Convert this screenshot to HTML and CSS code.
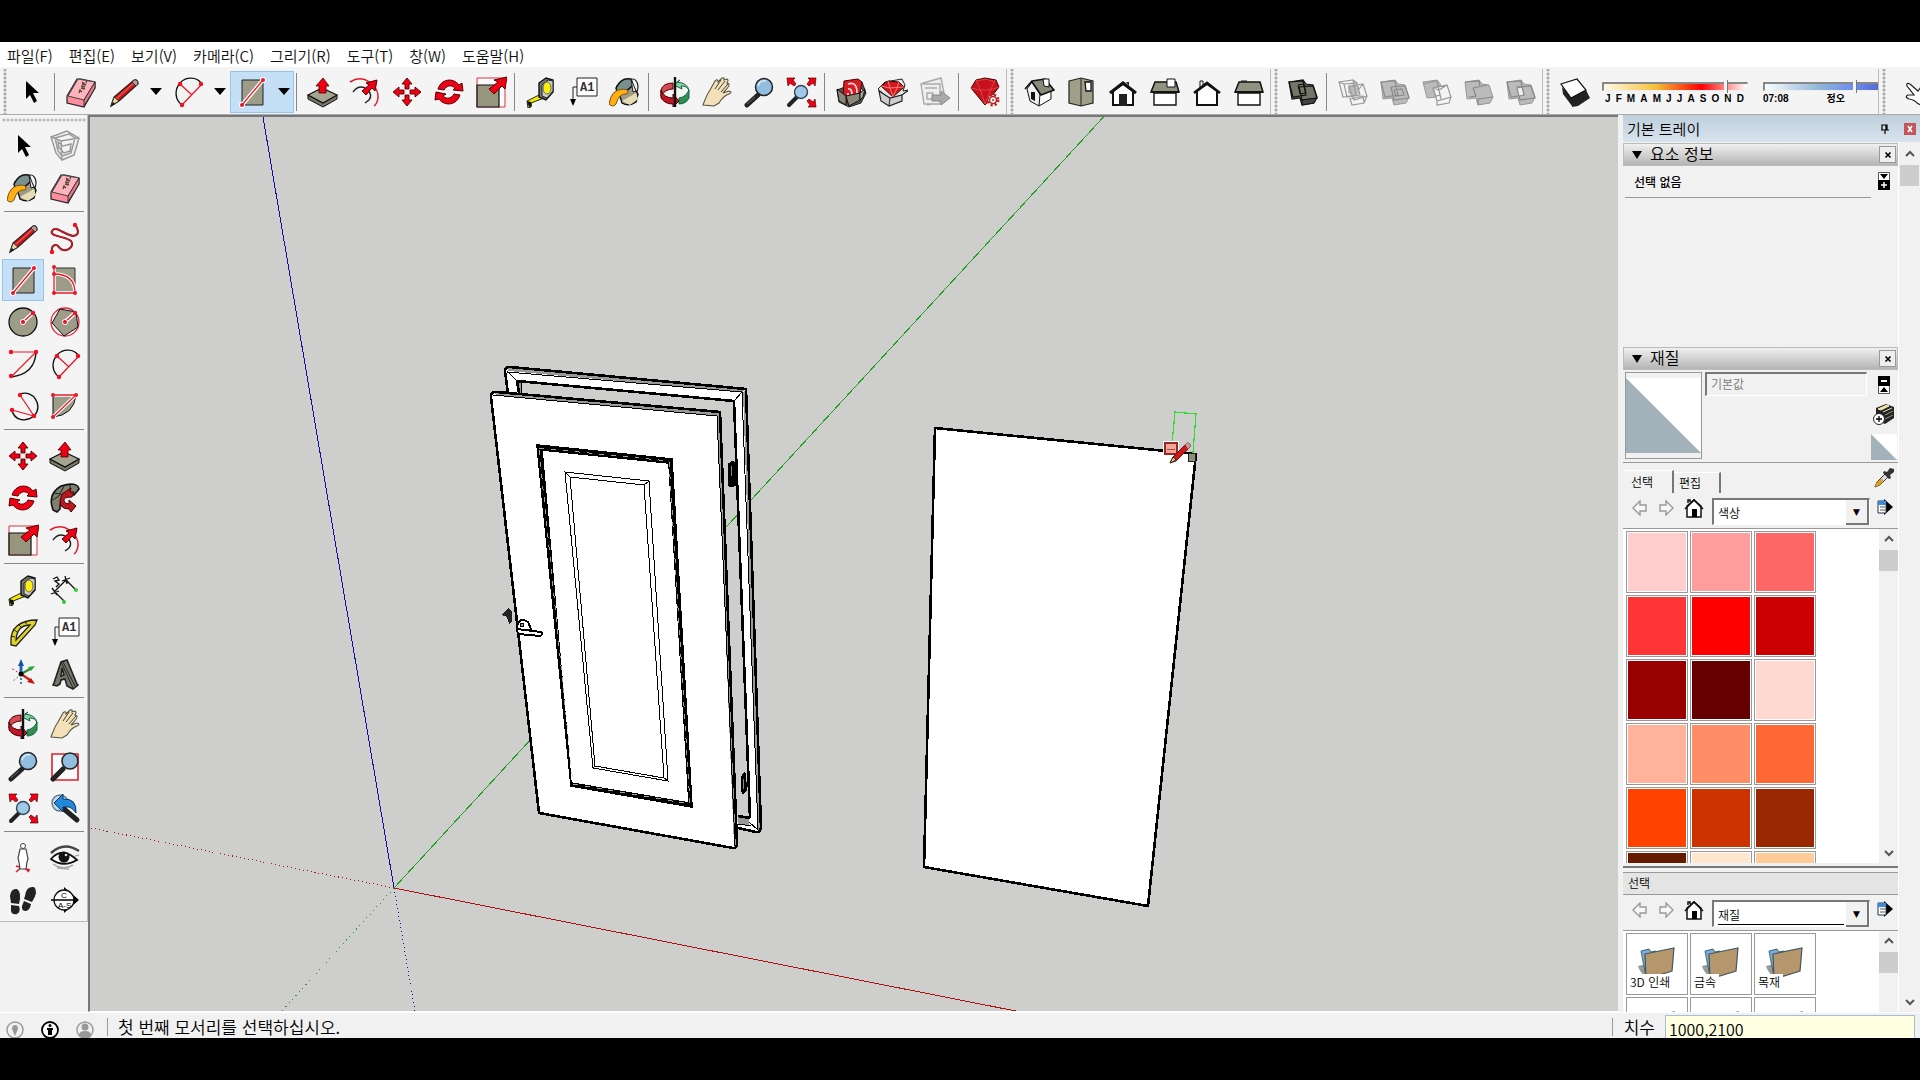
FILE: index.html
```html
<!doctype html>
<html lang="ko">
<head>
  <meta charset="UTF-8">
  <meta name="viewport" content="width=device-width, initial-scale=1">
  <title>SketchUp</title>
  <link rel="stylesheet" href="styles.css">
</head>
<body>

  <!-- icon sheet -->
  <svg class="sheet" aria-hidden="true">
    <symbol id="select" viewBox="0 0 32 32"><path d="M11 5v18l4-4 4 8 3-2-4-8h6z" fill="#000"/></symbol>
    <symbol id="eraser" viewBox="0 0 32 32">
      <path d="M2 20 12 3h4l14 3v6L19 31 2 27z" fill="#ff8c9c" stroke="#222" stroke-width="1.2"/>
      <path d="m3 20 10-17 17 3-11 18z" fill="#ffb3bd" stroke="#444"/>
      <path d="m19 24 11-18v6L19 30z" fill="#e8788c" stroke="#333"/>
      <path d="m14 17 1-3 2 2m-1-4 4 1m-4-3 4 1m-3-3 4 1-4-3m4 1 1-3" fill="none" stroke="#543" stroke-width="1.3"/>
    </symbol>
    <symbol id="pencil" viewBox="0 0 32 32">
      <path d="m3 30 3-9L26 4q4-1 4 4L11 25z" fill="#c81818" stroke="#222" stroke-width="1.2"/>
      <path d="m8 23 18-16" stroke="#f05050" stroke-width="1.5"/>
      <path d="m3 30 3-9 5 4z" fill="#e8d8a0" stroke="#333"/><path d="m3 30 2-4 2 2z" fill="#111"/>
      <path d="m24 6 2-2q4-1 4 4l-2 2z" fill="#b99" stroke="#333"/>
    </symbol>
    <symbol id="arc2" viewBox="0 0 32 32">
      <path d="M10 29C3 24 2 14 8 7s17-6 21 0" fill="none" stroke="#111" stroke-width="1.4"/>
      <path d="m10 29 19-20M8 8l12 11" fill="none" stroke="#f01020" stroke-width="1.2"/>
      <g fill="#f01020"><circle cx="8" cy="8" r="2.2"/><circle cx="29" cy="8" r="2.2"/><circle cx="10" cy="29" r="2.2"/></g>
    </symbol>
    <symbol id="rect" viewBox="0 0 32 32">
      <path d="M6 4h21v25H6z" fill="#9c9c88" stroke="#222"/>
      <path d="M6 29 27 4" stroke="#fff" stroke-width="4"/><circle cx="6" cy="29" r="3" fill="#fff"/><circle cx="27" cy="4" r="3" fill="#fff"/>
      <path d="M6 29 27 4" stroke="#e81828" stroke-width="1.3"/><circle cx="6" cy="29" r="2" fill="#e81828"/><circle cx="27" cy="4" r="2" fill="#e81828"/>
    </symbol>
    <symbol id="pushpull" viewBox="0 0 32 32">
      <path d="M1 19v4l15 8 14-8v-4L16 27z" fill="#77776a" stroke="#111"/>
      <path d="m1 19 14-7 15 7-14 8z" fill="#a5a592" stroke="#111" stroke-width="1.2"/>
      <path d="M12 17V10H9l7-8 6 8h-3v7z" fill="#f00014" stroke="#400" stroke-width=".8"/>
    </symbol>
    <symbol id="offset" viewBox="0 0 32 32">
      <path d="M1 6c14-9 29 4 28 16q-1 6-4 8" fill="none" stroke="#e01828" stroke-width="1.5"/>
      <path d="M4 16q6-8 14-3 6 6 2 11l-4 3" fill="none" stroke="#222" stroke-width="1.4"/>
      <path d="m13 15 7-6-3-2 11-3-2 11-3-3-6 7z" fill="#f00014" stroke="#500"/>
    </symbol>
    <symbol id="move" viewBox="0 0 32 32">
      <g fill="#f00014" stroke="#500" stroke-width=".9"><path d="m16 2 5 6h-3v5h-4V8h-3z"/><path d="m16 30 5-6h-3v-5h-4v5h-3z"/><path d="m2 16 6-5v3h5v4H8v3z"/><path d="m30 16-6-5v3h-5v4h5v3z"/></g>
    </symbol>
    <symbol id="rotate" viewBox="0 0 32 32">
      <path d="M5 13C8 3 20 1 26 9l3-2 1 8-10-1 2-2c-4-4-9-2-11 2z" fill="#f00014" stroke="#500"/>
      <path d="M27 19c-3 10-15 12-21 4l-4 1 1-8 10 2-3 2c4 4 9 2 11-2z" fill="#f00014" stroke="#500"/>
    </symbol>
    <symbol id="scale" viewBox="0 0 32 32">
      <path d="M2 2h28v29H2z" fill="#fff" fill-opacity=".6" stroke="#e03040"/>
      <path d="M2 9h22v22H2z" fill="#96967f" stroke="#111" stroke-width="1.2"/>
      <path d="m14 13 9-7-4-2 13-3-2 12-3-3-8 8z" fill="#f00014" stroke="#500"/>
    </symbol>
    <symbol id="tape" viewBox="0 0 32 32">
      <path d="m2 25 14-7 3 4-13 5v4l-3 1z" fill="#f4e800" stroke="#222"/>
      <path d="m2 25 4 1 1 4-3 1z" fill="#111"/>
      <path d="m14 7 7-5 7 2v12l-7 8-7-3z" fill="#777" stroke="#111" stroke-width="1.4"/>
      <path d="m17 9 6-5 5 1v10l-6 7-5-2z" fill="#ccc" stroke="#222"/><ellipse cx="22" cy="12" rx="4" ry="6" fill="#ffef10" stroke="#665"/>
    </symbol>
    <symbol id="text" viewBox="0 0 32 32">
      <path d="M10 2h20v18H10z" fill="#fff" stroke="#222"/><path d="M10 11H6v14" fill="none" stroke="#222"/>
      <path d="M3 23h6l-3 7z"/><text x="13" y="15" class="glyph">A1</text>
    </symbol>
    <symbol id="paint" viewBox="0 0 32 32">
      <ellipse cx="24" cy="11" rx="5" ry="8" fill="none" stroke="#222" stroke-width="1.2"/>
      <path d="m8 10 12-6 9 14-2 8q-7 5-14 1z" fill="#a09c84" stroke="#111" stroke-width="1.4"/>
      <path d="m13 25 14-8 2 6-8 6z" fill="#e6dcb8"/>
      <path d="M7 12Q12 1 22 3l2 6Q16 18 8 16z" fill="#78908e" stroke="#111" stroke-width="1.5"/>
      <path d="M15 13Q2 13 0 28q4 4 7 0 3-11 11-10 3-4-3-5z" fill="#ffb010" stroke="#775020"/>
      <path d="m22 3 5 12-3 1z" fill="#eee" stroke="#222"/>
    </symbol>
    <symbol id="orbit" viewBox="0 0 32 32">
      <path d="M18 6q11 1 12 9-1-5-8-5l1 3-8-4 6-5z" fill="#8fd0a5" stroke="#164"/>
      <path d="M30 14v8q-3 6-10 6v-6q7-1 10-8z" fill="#2f8e50" stroke="#164"/>
      <path d="M2 14Q4 7 14 7v6Q6 13 2 20z" fill="#d84a54" stroke="#400"/>
      <path d="M2 14v8q4 6 12 6v3l6-6-6-7v4Q5 22 2 14z" fill="#c01428" stroke="#400"/>
      <path d="M16 1v30" stroke="#111" stroke-width="2.4"/>
    </symbol>
    <symbol id="pan" viewBox="0 0 32 32">
      <path d="M2 29q4-11 7-15l5-9q3-3 3 1l4-4q3-1 2 2l3-1q2 1 0 4l2 1q1 2-6 9l6-2q4 1 0 3-6 2-10 9l-5 3z" fill="#f3dfb8" stroke="#554" stroke-width="1.1"/>
      <path d="m14 13 6-9m-3 10 7-9m-4 11 7-8" fill="none" stroke="#443"/>
    </symbol>
    <symbol id="zoom" viewBox="0 0 32 32">
      <path d="m4 29 11-10" stroke="#222" stroke-width="5" stroke-linecap="round"/><path d="m4 28 8-7" stroke="#666"/>
      <circle cx="21" cy="11" r="8.5" fill="#92bde0" stroke="#222" stroke-width="1.5"/><path d="M15 10q2-6 8-5" fill="none" stroke="#d8ecf8" stroke-width="1.5"/>
    </symbol>
    <symbol id="zoomext" viewBox="0 0 32 32">
      <path d="m4 29 8-8" stroke="#222" stroke-width="4" stroke-linecap="round"/><circle cx="16" cy="16" r="6.500" fill="#a0c8e8" stroke="#345" stroke-width="1.4"/>
      <g fill="#f00014" stroke="#500" stroke-width=".7"><path d="M2 2h8L8 4l3 4-2 2-4-3-2 3z"/><path d="M31 2h-8l2 2-3 4 2 2 4-3 2 3z"/><path d="M31 31h-8l2-2-3-4 2-2 4 3 2-3z"/></g>
    </symbol>
    <symbol id="warehouse" viewBox="0 0 32 32">
      <path d="m2 14 8-3 20 6-8-10 5-1 4 11-5 10-12 4-10-5z" fill="#55554a" stroke="#222"/>
      <path d="m9 5 14-2 4 3-3 16-13 5-3-8z" fill="#d61c24" stroke="#500"/><path d="M13 8q9-3 9 9m-9-4q4-1 4 6m-4-2 0 4" fill="none" stroke="#ffd8d8" stroke-width="1.7"/>
      <path d="m2 13 9 7v9l-7-4zM11 20l14-3v7l-11 6z" fill="#8a8978" stroke="#111"/><path d="m25 17 5-4-2 8-3 3z" fill="#aaa995" stroke="#111"/>
    </symbol>
    <symbol id="extware" viewBox="0 0 32 32">
      <path d="m1 13 7-7 17-3 3 6-2 6 5-1-6 5-13 4z" fill="#e8e8e4" stroke="#222"/>
      <path d="m4 10 7-5 11 1 5 5-11 10z" fill="#d41820" stroke="#300"/><path d="m4 10 9 2 14-1M11 5l2 7 3 9 4-9 2-6" fill="none" stroke="#ff7a7a"/>
      <path d="m2 15 11 7 12-3v6l-13 5-8-5z" fill="#ccc" stroke="#222" stroke-width="1.2"/><path d="m13 22-1 8m13-11 6-4" stroke="#222"/>
    </symbol>
    <symbol id="layout" viewBox="0 0 32 32">
      <g fill="#eee" stroke="#aaa" stroke-width="1.4"><path d="m4 7 18-5 4 20-17 7z"/><path d="M2 8h19v20H5z"/><path d="M6 12h12M8 17h6v6H8z"/></g>
      <path d="M13 19h9v-4l9 7-9 7v-4h-9z" fill="#aaa" stroke="#888"/>
    </symbol>
    <symbol id="extmgr" viewBox="0 0 32 32">
      <path d="m2 12 5-8 9-2 11 2 3 7-14 18z" fill="#c5121c" stroke="#400"/><path d="M2 12q14 5 28-1M7 4l4 9 5 15 6-15 4-9M7 5l10-2 9 3" fill="none" stroke="#e84a4a" stroke-width=".8"/>
      <circle cx="24" cy="24" r="5" fill="#f3f3f3" stroke="#c02020" stroke-width="3" stroke-dasharray="2 2"/><circle cx="24" cy="24" r="3.500" fill="#fff" stroke="#c02020" stroke-width="1.6"/><circle cx="24" cy="24" r="1" fill="#c02020"/>
    </symbol>
    <symbol id="iso" viewBox="0 0 32 32">
      <path d="m4 13 5-7 9 14-2 10-9-5z" fill="#eee" stroke="#111"/><path d="m17 18 11-5v10l-12 7z" fill="#fff" stroke="#111"/>
      <path d="m2 13 7-8 13-2 9 11-13 5-9-13" fill="#8a8a78" stroke="#111" stroke-width="1.6"/><path d="M8 16h4v9l-4-2z" fill="#111"/><path d="M20 3h6v8l-5-1z" fill="#fff" stroke="#111"/>
    </symbol>
    <symbol id="top" viewBox="0 0 32 32"><path d="m4 5 12-3 12 3v22l-12 3-12-3z" fill="#a0a08a" stroke="#222" stroke-width="1.2"/><path d="M16 3v27" stroke="#222"/><path d="M20 6h6v9h-5z" fill="#fff" stroke="#111" stroke-width="1.3"/></symbol>
    <symbol id="front" viewBox="0 0 32 32"><path d="M6 15v14h20V15L16 8z" fill="#fff" stroke="#111" stroke-width="2"/><path d="m3 17 13-10 13 10" fill="none" stroke="#111" stroke-width="3"/><path d="M12 18h8v12h-8zM19 6h3v4z" fill="#222"/></symbol>
    <symbol id="right" viewBox="0 0 32 32"><path d="M5 17h22v12H5z" fill="#fff" stroke="#111" stroke-width="1.4"/><path d="m2 16 4-10h21l3 10z" fill="#929280" stroke="#111" stroke-width="1.5"/><path d="M2 16h28" stroke="#111" stroke-width="2"/><path d="M18 3h8v8h-8z" fill="#fff" stroke="#111"/></symbol>
    <symbol id="back" viewBox="0 0 32 32"><path d="M9 12V5h3v5" fill="#fff" stroke="#111"/><path d="M6 15v14h20V15L16 8z" fill="#fff" stroke="#111" stroke-width="2"/><path d="m3 17 13-10 13 10" fill="none" stroke="#111" stroke-width="2.6"/></symbol>
    <symbol id="left" viewBox="0 0 32 32"><path d="M8 6V4h6v2" fill="#888"/><path d="M5 17h22v12H5z" fill="#fff" stroke="#111" stroke-width="1.4"/><path d="m2 16 4-10h21l3 10z" fill="#929280" stroke="#111" stroke-width="1.5"/><path d="M2 16h28" stroke="#111" stroke-width="2"/></symbol>
    <symbol id="solid" viewBox="0 0 32 32">
      <path d="m2 6 14-2 3 4 7 1 4 12-3 6-12 2-2-7-8 1z" fill="#65655a" stroke="#111" stroke-width="1.2"/>
      <path d="m2 6 14-1 3 14-13 2zM12 11l14-1 4 12-15 2z" fill="#757568" stroke="#111" stroke-width="1.2"/><path d="m15 24 15-2-3 5-12 2z" fill="#444" stroke="#111"/><path d="m11 9 6-1 2 9-6 1z" fill="none" stroke="#111"/>
    </symbol>
    <symbol id="solid1" viewBox="0 0 32 32"><path d="m11 9 9-1 2 10-6 2-5-3z" fill="#bbb"/><path d="m2 6 14-2 3 15-13 2zm5 2 13-1 3 12-13 2zm5 3 14-3 4 12-13 4zm1 12 13-3 1 7-12 2zM2 6l5 2m9-4 4 3m6 1-4 5m8 7-3 7" fill="none" stroke="#999" stroke-width="1.2"/></symbol>
    <symbol id="solid2" viewBox="0 0 32 32"><path d="m2 6 14-2 3 4 7 1 4 12-3 6-12 2-2-7-9 1z" fill="#bbb" stroke="#999"/><path d="m2 6 14-1 3 14-13 2zm10 5 14-1 4 12-15 2zm3 3 8-1 2 6-8 1z" fill="none" stroke="#8b8b8b" stroke-width="1.2"/></symbol>
    <symbol id="solid3" viewBox="0 0 32 32"><path d="m2 6 14-2 4 5-8 3 3 9-9 1z" fill="#bbb" stroke="#999"/><path d="m12 12 14-3 4 12-14 4zm4 13v4l12-2 2-6M2 8l14-3 3 14-4 1M12 12l6 2 8-5m-8 5 2 9" fill="none" stroke="#999" stroke-width="1.2"/></symbol>
    <symbol id="solid4" viewBox="0 0 32 32"><path d="m2 6 14-2 3 4 7 1 4 12-3 6-12 2-2-7-9 1z" fill="#bbb" stroke="#999"/><path d="m2 6 14-1 1 6M10 12l3 8-7 1M10 12l14-3m-9 14 15-2m-15 2v6" fill="none" stroke="#888" stroke-width="1.2"/></symbol>
    <symbol id="solid5" viewBox="0 0 32 32"><path d="m2 6 14-2 3 4 7 1 4 12-3 6-12 2-2-7-9 1z" fill="#bbb" stroke="#999"/><path d="m2 6 14-1 3 14-13 2zm10 5 14-1 4 12-15 2z" fill="none" stroke="#888" stroke-width="1.2"/><path d="m12 12 5-1 2 8-5 1z" fill="#eee" stroke="#888"/></symbol>
    <symbol id="shadow" viewBox="0 0 32 32"><path d="m3 11 9 10 1 9-9-12zM12 21l15-7 4 8-12 8-6 1z" fill="#222"/><path d="m2 8 16-5 9 11-15 8z" fill="#fff" stroke="#111" stroke-width="1.2"/></symbol>
    <symbol id="hand" viewBox="0 0 32 32"><path d="M32 6q-5-2-6 5l-3 4-8-7q-4-2-3 2l7 9-6 0q-4 2 1 4 6 1 8 4 5 3 10 3" fill="#fff" stroke="#222" stroke-width="1.2"/></symbol>

    <symbol id="component" viewBox="0 0 32 32"><path d="m2 7 16-6 12 7-5 17-12 5-6-7zM2 7l10 4 18-3M12 11l1 19M6 8l14-4 6 4-4 15-9 3-4-5zM9 12l5 4 8-2-1 7-6 2-5-5z" fill="none" stroke="#999" stroke-width="1.5"/></symbol>
    <symbol id="freehand" viewBox="0 0 32 32"><path id="curve" d="M27 4q5 9-3 10C14 12 6 3 3 9s14 5 19 10c3 4-1 10-8 9-5-1-4-6-8-5q-4 1-3 7" fill="none" stroke="#601018" stroke-width="2"/><path d="M27 4q5 9-3 10C14 12 6 3 3 9s14 5 19 10c3 4-1 10-8 9-5-1-4-6-8-5q-4 1-3 7" fill="none" stroke="#d81c28" stroke-width="1.2"/><circle cx="26" cy="3" r="2.200" fill="#f01020"/><circle cx="3" cy="30" r="2.200" fill="#f01020"/></symbol>
    <symbol id="rotrect" viewBox="0 0 32 32"><path d="M5 4h21v25H5z" fill="#9c9c88" stroke="#333"/><path d="M5 3v26h21c0-14-9-19-21-19" fill="none" stroke="#fff" stroke-width="3.500"/><path d="M5 3v26h21c0-14-9-19-21-19" fill="none" stroke="#e81828" stroke-width="1.3"/><g fill="#e81828"><circle cx="5" cy="3" r="2"/><circle cx="5" cy="10" r="2"/><circle cx="5" cy="29" r="2"/><circle cx="26" cy="29" r="2"/></g></symbol>
    <symbol id="circle" viewBox="0 0 32 32"><circle cx="16" cy="16" r="14" fill="#9c9c88" stroke="#111" stroke-width="1.3"/><path d="m16 16 10-9" stroke="#fff" stroke-width="4"/><path d="m16 16 10-9" stroke="#e81828" stroke-width="1.4"/><circle cx="16" cy="16" r="2.6" fill="#e81828" stroke="#fff"/><circle cx="26" cy="7" r="2.2" fill="#e81828"/></symbol>
    <symbol id="polygon" viewBox="0 0 32 32"><circle cx="16" cy="16" r="14" fill="none" stroke="#e02838" stroke-width="1.3"/><path d="M11 3 27 6l2 15-14 9L3 17z" fill="#9c9c88" stroke="#111"/><path d="m16 16 10-9" stroke="#fff" stroke-width="4"/><path d="m16 16 10-9" stroke="#e81828" stroke-width="1.4"/><circle cx="16" cy="16" r="2.6" fill="#e81828" stroke="#fff"/><circle cx="26" cy="7" r="2.2" fill="#e81828"/></symbol>
    <symbol id="arc1" viewBox="0 0 32 32"><path d="M29 4q-1 22-25 25" fill="none" stroke="#111" stroke-width="1.4"/><path d="M4 4h25L4 29" fill="none" stroke="#e81828" stroke-width="1.2"/><g fill="#f01020"><circle cx="4" cy="4" r="2.2"/><circle cx="29" cy="4" r="2.2"/><circle cx="4" cy="28" r="2.2"/></g></symbol>
    <symbol id="arc3" viewBox="0 0 32 32"><path d="M13 4c13-5 24 12 14 22-9 7-20 4-22-6" fill="none" stroke="#111" stroke-width="1.4"/><path d="m13 5 14 21-22-6" fill="none" stroke="#e81828" stroke-width="1.2"/><g fill="#f01020"><circle cx="13" cy="5" r="2.2"/><circle cx="5" cy="20" r="2.2"/><circle cx="27" cy="26" r="2.2"/></g></symbol>
    <symbol id="pie" viewBox="0 0 32 32"><path d="M4 5h23q-2 20-23 22z" fill="#9c9c88" stroke="#111"/><path d="M4 5h23L4 27" fill="none" stroke="#fff" stroke-width="3.5"/><path d="M4 5h23L4 27" fill="none" stroke="#e81828" stroke-width="1.3"/><g fill="#f01020"><circle cx="4" cy="5" r="2"/><circle cx="27" cy="5" r="2"/><circle cx="4" cy="27" r="2"/></g></symbol>
    <symbol id="follow" viewBox="0 0 32 32"><path d="M4 28Q-2 12 12 4q16-5 18 3l-5 6-5-3q-9 2-9 17l-3 3z" fill="#80806f" stroke="#111" stroke-width="1.6"/><path d="m2 19 8-5 5-10M4 11l8 1m9-9 0 7" fill="none" stroke="#222"/><path d="m13 12 9-6-1 4h4l-2 5q-9 0-8 4 1 3 5 3v-4l7 6-5 6-2-3q-9 0-9-8z" fill="#b9191f" stroke="#400"/></symbol>
    <symbol id="dimension" viewBox="0 0 32 32"><path d="M5 18 17 6m-1-4 2 8m3-6-8 3M3 14l5 7m2-4-8 3m4-2 9 9m2-21 9 9M4 5l4-2 2 3-4 1 4 3-3 3" fill="none" stroke="#111" stroke-width="1.3"/><circle cx="15" cy="28" r="2" fill="#3c3"/><circle cx="27" cy="16" r="2" fill="#3c3"/></symbol>
    <symbol id="protractor" viewBox="0 0 32 32"><path d="M4 26C3 12 13 4 30 4L28 9 9 30 4 29zm5-2L23 9Q10 9 9 24z" fill="#e0d428" stroke="#222" stroke-width="1.3" fill-rule="evenodd"/><path d="m4 20 4 1m-2-8 4 3m1-8 3 3m5-6v3" stroke="#222"/></symbol>
    <symbol id="axes" viewBox="0 0 32 32"><path d="M14 16V7" stroke="#26b" stroke-width="3"/><path d="m14 16 9-5" stroke="#383" stroke-width="2.500"/><path d="m14 16 9 6" stroke="#c22" stroke-width="2.500"/><path d="m14 1 3 7h-6z" fill="#159"/><path d="m28 8-4 5-3-4z" fill="#2a3"/><path d="m28 26-8-2 4-4z" fill="#c11"/><path d="M14 16v12" stroke="#159" stroke-width="1.5" stroke-dasharray="2"/><path d="M14 16 4 10" stroke="#c22" stroke-dasharray="2"/><path d="m14 16-9 8" stroke="#2a3" stroke-dasharray="2"/><circle cx="14" cy="16" r="2.5"/></symbol>
    <symbol id="text3d" viewBox="0 0 32 32"><path d="m5 25 7-21 6-2 10 24 1 1-5 4-6-3-2-7-4 1-1 4-3 2-4-1zM12 18l3-1-2-7z" fill="#77776a" stroke="#222" stroke-width="1.6" fill-rule="evenodd"/><path d="m12 4 12 26M14 4l12 24" stroke="#222"/></symbol>
    <symbol id="zoomwin" viewBox="0 0 32 32"><path d="M3 4h26v26H3z" fill="#fafafa" stroke="#e02030" stroke-width="1.6"/><path d="m4 29 10-10" stroke="#222" stroke-width="5" stroke-linecap="round"/><circle cx="21" cy="11" r="8" fill="#92bde0" stroke="#222" stroke-width="1.5"/></symbol>
    <symbol id="prev" viewBox="0 0 32 32"><circle cx="11" cy="11" r="8" fill="#c2dced" stroke="#678" stroke-width="1.4"/><path d="m15 17 13 11" stroke="#222" stroke-width="5" stroke-linecap="round"/><path d="m5 11 9-9v5q14-1 13 14-5-8-13-6v5z" fill="#2188dc" stroke="#135"/></symbol>
    <symbol id="camera" viewBox="0 0 32 32"><path d="m9 30 7-6 6 6M9 24l14 4" stroke="#e01828" stroke-width="1.5" fill="none"/><circle cx="16" cy="4" r="2.5" fill="#fff" stroke="#444"/><path d="m13 7 6 0 2 10-1 3-1 7h-6l-1-7-1-4z" fill="#fff" stroke="#444" stroke-width="1.2"/></symbol>
    <symbol id="eye" viewBox="0 0 32 32"><path d="M2 11Q15-1 30 9" fill="none" stroke="#444" stroke-width="2.500"/><path d="M2 17q11-13 26 1-14 8-26-1z" fill="#fff" stroke="#111" stroke-width="1.8"/><circle cx="15" cy="15" r="5.500" fill="#111"/><circle cx="17" cy="13" r="1.3" fill="#ddd"/><path d="M4 22q10 7 20 1M8 26l12 1m6-13 4-1" fill="none" stroke="#aaa" stroke-width="1.5"/></symbol>
    <symbol id="walk" viewBox="0 0 32 32"><path d="M3 12q1-8 7-7 5 3 2 15l-8-1zM4 21l8 1q2 6-2 8-5 1-6-3zM18 12q1-10 9-9 5 4-2 15l-8-3zM17 17l7 3q-1 6-5 7-5 0-4-5z" fill="#222"/></symbol>
    <symbol id="section" viewBox="0 0 32 32"><path d="M15 3 30 16 15 29z"/><circle cx="15" cy="16" r="10" fill="#fff" stroke="#111" stroke-width="1.3"/><path d="M2 16h27" stroke="#111" stroke-width="1.6"/><text x="12" y="14" class="tiny">C</text><text x="9" y="24" class="tiny">A-S</text></symbol>

    <symbol id="prevarrow" viewBox="0 0 16 16"><path d="m1 8 7-7v4h6v6H8v4z" fill="#f8f8f8" stroke="#999" stroke-width="1.4"/></symbol>
    <symbol id="nextarrow" viewBox="0 0 16 16"><path d="M15 8 8 1v4H2v6h6v4z" fill="#f8f8f8" stroke="#999" stroke-width="1.4"/></symbol>
    <symbol id="home" viewBox="0 0 20 20"><path d="M3 8v11h14V8l-7-6zM4 5V2h2v2" fill="#fff" stroke="#111" stroke-width="1.5"/><path d="m1 11 9-9 9 9" fill="none" stroke="#111" stroke-width="1.6"/><path d="M8 11h5v8H8z"/></symbol>
    <symbol id="details" viewBox="0 0 18 18"><path d="M8 1v16l9-8z"/><path d="M2 3h8v12H2z" fill="#fff" stroke="#234"/><path d="M2 3h8v4H2z" fill="#3b8ad8"/><path d="M4 9h5m-5 3h5" stroke="#555"/></symbol>
    <symbol id="folder" viewBox="0 0 38 34">
      <path d="m1 20 8-2v13q-6-4-8-11z" fill="#999"/><path d="m4 5 8-2 2 3 5-1v15L9 31z" fill="#79aed6" stroke="#467"/>
      <path d="m8 8 29-6-2 23-26 8z" fill="#b5976b" stroke="#46545c" stroke-width="1.2"/>
    </symbol>
    <symbol id="up" viewBox="0 0 12 12"><path d="m2 8 4-4 4 4" fill="none" stroke="#555" stroke-width="2"/></symbol>
    <symbol id="down" viewBox="0 0 12 12"><path d="m2 4 4 4 4-4" fill="none" stroke="#555" stroke-width="2"/></symbol>
  </svg>

  <div class="app">
    <nav class="menubar">
      <a href="#">파일(F)</a><a href="#">편집(E)</a><a href="#">보기(V)</a><a href="#">카메라(C)</a><a href="#">그리기(R)</a><a href="#">도구(T)</a><a href="#">창(W)</a><a href="#">도움말(H)</a>
    </nav>

    <div class="toolbar">
      <span class="grip first"></span>
      <button class="tool" aria-label="선택"><svg><use href="#select"/></svg></button>
      <span class="sep"></span>
      <button class="tool" aria-label="지우기"><svg><use href="#eraser"/></svg></button>
      <div class="split"><button class="tool" aria-label="선"><svg><use href="#pencil"/></svg></button><button class="drop" aria-label="선 도구"></button></div>
      <div class="split"><button class="tool" aria-label="호"><svg><use href="#arc2"/></svg></button><button class="drop" aria-label="호 도구"></button></div>
      <div class="split active"><button class="tool" aria-label="직사각형"><svg><use href="#rect"/></svg></button><button class="drop" aria-label="도형 도구"></button></div>
      <span class="sep"></span>
      <button class="tool" aria-label="밀기/끌기"><svg><use href="#pushpull"/></svg></button>
      <button class="tool" aria-label="오프셋"><svg><use href="#offset"/></svg></button>
      <button class="tool" aria-label="이동"><svg><use href="#move"/></svg></button>
      <button class="tool" aria-label="회전"><svg><use href="#rotate"/></svg></button>
      <button class="tool" aria-label="배율"><svg><use href="#scale"/></svg></button>
      <span class="sep"></span>
      <button class="tool" aria-label="줄자"><svg><use href="#tape"/></svg></button>
      <button class="tool" aria-label="텍스트"><svg><use href="#text"/></svg></button>
      <button class="tool" aria-label="페인트통"><svg><use href="#paint"/></svg></button>
      <span class="sep"></span>
      <button class="tool" aria-label="궤도"><svg><use href="#orbit"/></svg></button>
      <button class="tool" aria-label="이동 보기"><svg><use href="#pan"/></svg></button>
      <button class="tool" aria-label="확대/축소"><svg><use href="#zoom"/></svg></button>
      <button class="tool" aria-label="범위 확대"><svg><use href="#zoomext"/></svg></button>
      <span class="sep"></span>
      <button class="tool" aria-label="3D Warehouse"><svg><use href="#warehouse"/></svg></button>
      <button class="tool" aria-label="Extension Warehouse"><svg><use href="#extware"/></svg></button>
      <button class="tool" aria-label="LayOut"><svg><use href="#layout"/></svg></button>
      <span class="sep"></span>
      <button class="tool" aria-label="확장 관리자"><svg><use href="#extmgr"/></svg></button>
      <span class="grip"></span>
      <button class="tool" aria-label="등각투상"><svg><use href="#iso"/></svg></button>
      <button class="tool" aria-label="상단"><svg><use href="#top"/></svg></button>
      <button class="tool" aria-label="정면"><svg><use href="#front"/></svg></button>
      <button class="tool" aria-label="오른쪽"><svg><use href="#right"/></svg></button>
      <button class="tool" aria-label="후면"><svg><use href="#back"/></svg></button>
      <button class="tool" aria-label="왼쪽"><svg><use href="#left"/></svg></button>
      <span class="grip"></span>
      <button class="tool" aria-label="외곽 셸"><svg><use href="#solid"/></svg></button>
      <span class="sep"></span>
      <button class="tool" aria-label="교차"><svg><use href="#solid1"/></svg></button>
      <button class="tool" aria-label="결합"><svg><use href="#solid2"/></svg></button>
      <button class="tool" aria-label="빼기"><svg><use href="#solid3"/></svg></button>
      <button class="tool" aria-label="트림"><svg><use href="#solid4"/></svg></button>
      <button class="tool" aria-label="분할"><svg><use href="#solid5"/></svg></button>
      <span class="grip"></span>
      <button class="tool" aria-label="그림자"><svg><use href="#shadow"/></svg></button>
      <div class="slider month">
        <input type="range" min="0" max="100" value="86" aria-label="날짜">
        <div class="ticks"><span>J</span><span>F</span><span>M</span><span>A</span><span>M</span><span>J</span><span>J</span><span>A</span><span>S</span><span>O</span><span>N</span><span>D</span></div>
      </div>
      <div class="slider time">
        <input type="range" min="0" max="100" value="63" aria-label="시간">
        <div class="ticks"><span>07:08</span><span>정오</span></div>
      </div>
      <span class="grip"></span>
      <button class="tool" aria-label="상호 작용"><svg><use href="#hand"/></svg></button>
    </div>

    <main class="work">
      <aside class="palette">
        <span class="handle"></span>
        <button class="tool" aria-label="선택"><svg><use href="#select"/></svg></button>
        <button class="tool" aria-label="구성요소 만들기"><svg><use href="#component"/></svg></button>
        <button class="tool" aria-label="페인트통"><svg><use href="#paint"/></svg></button>
        <button class="tool" aria-label="지우기"><svg><use href="#eraser"/></svg></button>
        <hr>
        <button class="tool" aria-label="선"><svg><use href="#pencil"/></svg></button>
        <button class="tool" aria-label="자유곡선"><svg><use href="#freehand"/></svg></button>
        <button class="tool active" aria-label="직사각형"><svg><use href="#rect"/></svg></button>
        <button class="tool" aria-label="회전된 직사각형"><svg><use href="#rotrect"/></svg></button>
        <button class="tool" aria-label="원"><svg><use href="#circle"/></svg></button>
        <button class="tool" aria-label="다각형"><svg><use href="#polygon"/></svg></button>
        <button class="tool" aria-label="호"><svg><use href="#arc1"/></svg></button>
        <button class="tool" aria-label="2점 호"><svg><use href="#arc2"/></svg></button>
        <button class="tool" aria-label="3점 호"><svg><use href="#arc3"/></svg></button>
        <button class="tool" aria-label="파이"><svg><use href="#pie"/></svg></button>
        <hr>
        <button class="tool" aria-label="이동"><svg><use href="#move"/></svg></button>
        <button class="tool" aria-label="밀기/끌기"><svg><use href="#pushpull"/></svg></button>
        <button class="tool" aria-label="회전"><svg><use href="#rotate"/></svg></button>
        <button class="tool" aria-label="따라가기"><svg><use href="#follow"/></svg></button>
        <button class="tool" aria-label="배율"><svg><use href="#scale"/></svg></button>
        <button class="tool" aria-label="오프셋"><svg><use href="#offset"/></svg></button>
        <hr>
        <button class="tool" aria-label="줄자"><svg><use href="#tape"/></svg></button>
        <button class="tool" aria-label="치수"><svg><use href="#dimension"/></svg></button>
        <button class="tool" aria-label="각도기"><svg><use href="#protractor"/></svg></button>
        <button class="tool" aria-label="텍스트"><svg><use href="#text"/></svg></button>
        <button class="tool" aria-label="축"><svg><use href="#axes"/></svg></button>
        <button class="tool" aria-label="3D 텍스트"><svg><use href="#text3d"/></svg></button>
        <hr>
        <button class="tool" aria-label="궤도"><svg><use href="#orbit"/></svg></button>
        <button class="tool" aria-label="이동 보기"><svg><use href="#pan"/></svg></button>
        <button class="tool" aria-label="확대/축소"><svg><use href="#zoom"/></svg></button>
        <button class="tool" aria-label="창 확대"><svg><use href="#zoomwin"/></svg></button>
        <button class="tool" aria-label="범위 확대"><svg><use href="#zoomext"/></svg></button>
        <button class="tool" aria-label="이전"><svg><use href="#prev"/></svg></button>
        <hr>
        <button class="tool" aria-label="카메라 배치"><svg><use href="#camera"/></svg></button>
        <button class="tool" aria-label="둘러보기"><svg><use href="#eye"/></svg></button>
        <button class="tool" aria-label="걷기"><svg><use href="#walk"/></svg></button>
        <button class="tool" aria-label="단면"><svg><use href="#section"/></svg></button>
      </aside>

      <div class="viewport">
        <svg class="scene" viewBox="89 116 1528 894" preserveAspectRatio="xMidYMid slice" shape-rendering="crispEdges" role="img" aria-label="모델">
          <!-- axes -->
          <g fill="none">
            <path d="M261 110 393 887" stroke="#1010a0"/>
            <path d="m393 887 24 140" stroke="#1010a0" stroke-dasharray="1 3"/>
            <path d="m393 887 647 128" stroke="#b01010"/>
            <path d="M393 887 80 825" stroke="#b01010" stroke-dasharray="1 3"/>
            <path d="M393 887 1108 110" stroke="#20a020"/>
            <path d="M393 887 270 1022" stroke="#20a020" stroke-dasharray="1 4"/>
          </g>

          <!-- frame -->
          <path d="m504 370 4-4 237 22 15 439-5 4-19-4 1-12 12 2-16-417-217-20 3 12h-13z" fill="#fff"/>
          <path d="m507 367 238 21-4 3-234-21zM742 391l3-3 15 439-3 3zM516 381l5 1v11h-4zM737 816l11 2v7l-11-2z" fill="#999"/>
          <g fill="none" stroke="#000">
            <path d="M506 371 741 391 757 829M506 370l10 10M741 391l-8 9M748 821l9 8M520 381v11M737 823l13 2"/>
            <path d="m507 393-3-23q0-4 5-4l236 22 15 439q-1 5-5 4l-18-4M518 392l-2-12 217 20 16 417M737 815l12 2" stroke-width="2.600"/>
          </g>

          <!-- hinges -->
          <path d="m727 463 5-3 2 3 2 20-4 3-4-1zm2 3 2 15m1-19 1 9" fill="#000" stroke="#000"/>
          <path d="m740 776 3-5 2 2 1 16-4 5-2-4z" fill="#000"/>
          <path d="M730 465v10M742 778v10" stroke="#888"/>

          <!-- door leaf -->
          <path d="m490 395 5-5 224 21 17 432-3 4-195-35z" fill="#fff"/>
          <path d="m493 391 226 20-2 4-222-21zM716 415l3-3 17 432-3 2z" fill="#999"/>
          <path d="m492 394 224 21 18 430" fill="none" stroke="#000"/>
          <path d="m538 812-48-416q0-6 6-5l223 20 17 432q-1 5-4 4z" fill="none" stroke="#000" stroke-width="2.600"/>

          <!-- mouldings -->
          <path d="m536 444 135 14 20 348-121-21zm5 5 29 333 118 20-20-340z" fill="#000" fill-rule="evenodd" stroke="#000" stroke-width="1.600"/>
          <path d="m538 447 130 13 21 343-117-20z" fill="none" stroke="#ccc" stroke-width=".8" stroke-dasharray="5 7"/>
          <g fill="none" stroke="#000">
            <path d="m564 471 84 9 19 300-75-13zM569 476l74 8 20 293-69-12zM564 471l5 5M648 480l-5 4M667 780l-4-3M592 767l2-2"/>
          </g>

          <!-- lock and lever -->
          <path d="m501 614 6-7 4 3v10l-3 3-2-7z" fill="#222"/>
          <g stroke="#000" stroke-width="2"><path d="M516 626q2-11 11-5l3 7-4 4h-9z" fill="#fff"/><circle cx="521" cy="624" r="2" fill="#999" stroke-width="1"/><path d="m516 628 24 3q3 2-1 4l-22-2z" fill="#fff"/></g>

          <!-- new face -->
          <path d="m934 427 261 26-48 452-224-39z" fill="#fff" stroke="#000" stroke-width="2.600" stroke-linejoin="round"/>
          <path d="m1171 443 3-32 21 2-3 39" fill="none" stroke="#30dc30" stroke-width="1.2"/>
          <path d="M1187 452h7v8h-7z" fill="#8f8f80" stroke="#222"/>
          <path d="M1162 440h16v15h-16z" fill="#fff"/><path d="M1164 442h12v11h-12z" fill="#f0a898" stroke="#9b2828" stroke-width="2"/><path d="M1166 448h8" stroke="#b05040"/>
          <g shape-rendering="auto"><path d="m1169 462 3-6 14-14q4 0 3 4l-14 14z" fill="#d01818" stroke="#611"/><path d="m1169 462 3-6 3 3z" fill="#ddcfa0" stroke="#332"/><path d="m1184 443 2-1q4 0 3 4l-2 2z" fill="#b9a0a0"/></g>
        </svg>
      </div>

      <aside class="tray">
        <header class="traytitle">
          <h1>기본 트레이</h1>
          <button class="pin" aria-label="고정"><svg viewBox="0 0 12 12"><path d="M3 2h5v5H3zM2 7h8M6 7v4M7 2v5" fill="none" stroke="#000" stroke-width="1.2"/></svg></button>
          <button class="quit" aria-label="닫기"><svg viewBox="0 0 12 12"><path d="m4 3 4 6m0-6L4 9" stroke="#fff" stroke-width="1.6"/></svg></button>
        </header>

        <div class="traybody">
          <div class="panels">
            <section class="entity">
              <header class="bar"><span class="fold"></span><h2>요소 정보</h2><button class="close" aria-label="닫기"><svg viewBox="0 0 12 12"><path d="m3 3 6 6m0-6L3 9" stroke="#000" stroke-width="2"/></svg></button></header>
              <div class="info">
                <p>선택 없음</p>
                <button class="plain" aria-label="세부 정보"><svg class="toggle" viewBox="0 0 12 18"><path d="M.5.5h11v17H.5z" fill="#fff" stroke="#555"/><path d="M2 2h8L6 7zM0 8h12v10H0z"/><path d="M3 13h6M6 10v6" stroke="#fff" stroke-width="1.5"/></svg></button>
              </div>
            </section>

            <section class="materials">
              <header class="bar"><span class="fold"></span><h2>재질</h2><button class="close" aria-label="닫기"><svg viewBox="0 0 12 12"><path d="m3 3 6 6m0-6L3 9" stroke="#000" stroke-width="2"/></svg></button></header>
              <div class="current">
                <div class="preview"><svg viewBox="0 0 75 75"><path d="M0 0h75v75z" fill="#fff"/><path d="M0 0v75h75z" fill="#a3b2ba"/></svg></div>
                <input class="name" type="text" value="기본값" disabled aria-label="재질 이름">
                <div class="side">
                  <button class="plain" aria-label="보조 창"><svg class="toggle" viewBox="0 0 12 18"><path d="M.5.5h11v17H.5z" fill="#fff" stroke="#555"/><path d="M0 0h12v10H0zM2 16h8l-4-5z"/><path d="M3 4h6v2H3z" fill="#fff"/></svg></button>
                  <button class="plain" aria-label="재질 만들기"><svg class="make" viewBox="0 0 22 22"><path d="m3 5 10-4 8 3v11l-9 6-9-4z" fill="#222"/><path d="m5 6 9-4 2 1-8 4zm5 3 9-4" fill="#eee8b0" stroke="#eee8b0"/><path d="m12 12 8-4m-8 8 8-4" stroke="#997"/><circle cx="6" cy="16" r="5.5" fill="#fff" stroke="#222"/><path d="M3 16h6M6 13v6" stroke="#000" stroke-width="1.3"/></svg></button>
                  <button class="plain" aria-label="기본 재질"><svg class="default" viewBox="0 0 26 26"><path d="M0 0h26v26z" fill="#fff"/><path d="M0 0v26h26z" fill="#a3b2ba"/></svg></button>
                </div>
              </div>
              <div class="tabs">
                <button class="tab on">선택</button><button class="tab">편집</button>
                <button class="plain" aria-label="샘플 페인트"><svg class="dropper" viewBox="0 0 22 22"><path d="m2 20 2-5 9-9 3 3-9 9z" fill="#ddd" stroke="#333"/><path d="m2 20 2-5 5-4 1 4-3 3z" fill="#d9a020"/><path d="m11 4 3 1 3-4 4 1 0 3-4 3 1 3-2 1-6-6z" fill="#333"/></svg></button>
              </div>
              <div class="finder">
                <button class="plain" aria-label="뒤로"><svg class="arrow"><use href="#prevarrow"/></svg></button>
                <button class="plain" aria-label="앞으로"><svg class="arrow"><use href="#nextarrow"/></svg></button>
                <button class="plain" aria-label="모델에서"><svg class="home"><use href="#home"/></svg></button>
                <span class="combo"><select aria-label="재질 모음"><option>색상</option></select></span>
                <button class="plain" aria-label="세부 정보"><svg class="details"><use href="#details"/></svg></button>
              </div>
              <div class="list swatches">
                <div class="tiles">
                  <button class="tile a1" aria-label="A01"></button><button class="tile a2" aria-label="A02"></button><button class="tile a3" aria-label="A03"></button>
                  <button class="tile a4" aria-label="A04"></button><button class="tile a5" aria-label="A05"></button><button class="tile a6" aria-label="A06"></button>
                  <button class="tile a7" aria-label="A07"></button><button class="tile a8" aria-label="A08"></button><button class="tile b1" aria-label="B01"></button>
                  <button class="tile b2" aria-label="B02"></button><button class="tile b3" aria-label="B03"></button><button class="tile b4" aria-label="B04"></button>
                  <button class="tile b5" aria-label="B05"></button><button class="tile b6" aria-label="B06"></button><button class="tile b7" aria-label="B07"></button>
                  <button class="tile b8" aria-label="B08"></button><button class="tile c1" aria-label="C01"></button><button class="tile c2" aria-label="C02"></button>
                </div>
                <div class="scroll"><svg><use href="#up"/></svg><span class="thumb"></span><svg><use href="#down"/></svg></div>
              </div>
            </section>

            <section class="second">
              <h3>선택</h3>
              <div class="finder">
                <button class="plain" aria-label="뒤로"><svg class="arrow"><use href="#prevarrow"/></svg></button>
                <button class="plain" aria-label="앞으로"><svg class="arrow"><use href="#nextarrow"/></svg></button>
                <button class="plain" aria-label="모델에서"><svg class="home"><use href="#home"/></svg></button>
                <span class="combo focus"><select aria-label="재질 폴더"><option>재질</option></select></span>
                <button class="plain" aria-label="세부 정보"><svg class="details"><use href="#details"/></svg></button>
              </div>
              <div class="list folders">
                <div class="tiles">
                  <button class="tile"><svg><use href="#folder"/></svg><span>3D 인쇄</span></button>
                  <button class="tile"><svg><use href="#folder"/></svg><span>금속</span></button>
                  <button class="tile"><svg><use href="#folder"/></svg><span>목재</span></button>
                  <button class="tile" aria-label="폴더"><svg><use href="#folder"/></svg></button>
                  <button class="tile" aria-label="폴더"><svg><use href="#folder"/></svg></button>
                  <button class="tile" aria-label="폴더"><svg><use href="#folder"/></svg></button>
                </div>
                <div class="scroll"><svg><use href="#up"/></svg><span class="thumb"></span></div>
              </div>
            </section>
          </div>
          <div class="scroll outer"><svg><use href="#up"/></svg><span class="thumb"></span><svg><use href="#down"/></svg></div>
        </div>
      </aside>
    </main>

    <footer class="status">
      <button class="plain" aria-label="위치"><svg viewBox="0 0 18 18"><circle cx="9" cy="9" r="8" fill="none" stroke="#999" stroke-width="1.4"/><path d="M9 15 6 8q0-4 3-4t3 4z" fill="#999"/></svg></button>
      <button class="plain" aria-label="제작자"><svg viewBox="0 0 18 18"><circle cx="9" cy="9" r="8" fill="#fff" stroke="#000" stroke-width="1.8"/><circle cx="9" cy="4.500" r="1.500"/><path d="M6 7h6v2h-1v5H7V9H6z"/></svg></button>
      <button class="plain" aria-label="로그인"><svg viewBox="0 0 18 18"><circle cx="9" cy="9" r="8" fill="none" stroke="#999" stroke-width="1.4"/><circle cx="9" cy="6" r="3.500" fill="#999"/><path d="M3 14q0-4 6-4t6 4-6 3-6-3z" fill="#999"/></svg></button>
      <p class="hint">첫 번째 모서리를 선택하십시오.</p>
      <label for="vcb">치수</label>
      <input id="vcb" type="text" value="1000,2100">
    </footer>
  </div>

</body>
</html>
```
FILE: styles.css
```css
* {
  box-sizing: border-box;
}
html, body {
  height: 100%;
}
body {
  margin: 0;
  padding: 42px 0;
  background: #000;
  color: #000;
  font-family: "Noto Sans CJK KR", sans-serif;
  font-size: 12px;
  font-weight: 350;
}
h1, h2, h3, p {
  margin: 0;
  font-weight: inherit;
}
button {
  padding: 0;
  border: 0;
  background: none;
  color: inherit;
  font: inherit;
}
svg {
  display: block;
}
.sheet {
  display: none;
}
.glyph {
  font: bold 12px "Liberation Mono", monospace;
  fill: #333;
}
.tiny {
  font: 8px "Liberation Sans", sans-serif;
}
.app {
  display: flex;
  flex-direction: column;
  height: 100%;
  overflow: hidden;
  background: #f1f1f1;
}

/* menu */
.menubar {
  display: flex;
  flex: none;
  gap: 16px;
  height: 25px;
  padding: 0 7px;
  background: #fff;
  line-height: 28px;
  font-size: 15px;
}
.menubar a {
  color: #111;
  text-decoration: none;
  white-space: nowrap;
}

/* toolbars */
.toolbar {
  display: flex;
  flex: none;
  align-items: center;
  height: 48px;
  padding-top: 2px;
  overflow: hidden;
  background: #f4f4f4;
  border-bottom: 1px solid #aaa;
}
.toolbar > * {
  flex: none;
}
.tool {
  display: grid;
  place-items: center;
  width: 42px;
  height: 42px;
}
.tool svg {
  width: 32px;
  height: 32px;
}
.sep {
  width: 1px;
  height: 38px;
  margin: 0 5px 0 2px;
  background: #888;
}
.grip {
  width: 12px;
  height: 46px;
  border-left: 1px solid #bbb;
  background: radial-gradient(circle, #aaa 1px, transparent 2px) 3px 3px / 4px 4px repeat-y;
}
.grip.first {
  width: 10px;
  border-left: 0;
}
.split {
  display: flex;
  width: 64px;
  height: 42px;
}
.split .tool {
  width: 44px;
}
.drop {
  display: grid;
  place-items: center;
  width: 20px;
}
.drop::before {
  content: '';
  border: 6px solid transparent;
  border-top: 7px solid #000;
  border-bottom: 0;
}
.active {
  background: #c4dff6;
  outline: 1px solid #92c6ee;
  outline-offset: -1px;
}

.slider {
  height: 32px;
  margin-left: 6px;
  padding-top: 6px;
}
.slider + .slider {
  margin-left: 15px;
}
.slider input {
  display: block;
  width: 146px;
  height: 9px;
  margin: 0;
  appearance: none;
  border: 1px solid #eee;
  border-top: 2px solid #888;
  border-left: 2px solid #888;
}
.slider input::-webkit-slider-thumb {
  appearance: none;
  width: 4px;
  height: 13px;
  background: #f4f4f4;
  border-right: 1px solid #777;
}
.month {
  width: 146px;
}
.month input {
  background: linear-gradient(to right, #fffbe8, #f3c13a 36%, #f00 68%, #f88 85%, #fff);
}
.time {
  width: 115px;
  overflow: hidden;
}
.time input {
  background: linear-gradient(to right, #fafdff, #8fb6d8 38%, #6a88f0 65%, #3a3fa0);
}
.ticks {
  display: flex;
  justify-content: space-between;
  padding: 0 4px 0 3px;
  font: bold 10px/15px "Liberation Sans", "Noto Sans CJK KR", sans-serif;
}
.time .ticks {
  width: 82px;
  padding: 0;
}

.work {
  display: grid;
  grid-template-columns: 88px 1fr 297px;
  flex: 1;
  min-height: 0;
}
.palette {
  display: grid;
  grid-template-columns: 42px 42px;
  align-content: start;
  align-self: start;
  padding: 0 2px;
  background: #f4f4f4;
  border-right: 1px solid #bbb;
  border-bottom: 1px solid #bbb;
}
.palette hr {
  grid-column: 1 / 3;
  width: 80px;
  height: 1px;
  margin: 2px 2px 5px;
  border: 0;
  background: #888;
}
.handle {
  grid-column: 1 / 3;
  height: 10px;
  background: radial-gradient(circle, #bbb 1px, transparent 2px) 0 3px / 4px 4px repeat-x;
}

.viewport {
  min-width: 0;
  margin-right: 5px;
  border: 2px solid #777;
  border-right: 0;
  border-bottom: 1px solid #fff;
  background: #cececc;
  overflow: hidden;
}
.scene {
  width: 100%;
  height: 100%;
}

/* tray */
.tray {
  display: flex;
  flex-direction: column;
  min-height: 0;
}
.traytitle {
  display: flex;
  align-items: center;
  gap: 13px;
  height: 27px;
  padding: 0 4px;
  background: linear-gradient(#bfcedb, #d8e3ef);
}
.traytitle h1 {
  flex: 1;
  line-height: 26px;
  font-size: 15px;
}
.traytitle svg {
  width: 12px;
  height: 12px;
}
.quit {
  background: #c35459;
}
.traybody {
  display: flex;
  flex: 1;
  min-height: 0;
}
.panels {
  display: flex;
  flex: 1;
  flex-direction: column;
  min-width: 0;
  padding-top: 1px;
  border-right: 1px solid #fff;
}
.bar {
  display: flex;
  align-items: center;
  height: 23px;
  padding: 0 1px 0 8px;
  border: 1px solid #bbb;
  background: linear-gradient(#f0f0f0, #b4b4b4);
}
.fold {
  border: 5px solid transparent;
  border-top: 8px solid #000;
  border-bottom: 0;
}
.bar h2 {
  flex: 1;
  height: 21px;
  margin-left: 8px;
  line-height: 18px;
  font-size: 16px;
}
.close {
  display: grid;
  place-items: center;
  width: 17px;
  height: 17px;
  border: 1px solid #999;
  background: #eee;
}
.close svg {
  width: 10px;
  height: 10px;
}
.entity {
  flex: none;
  height: 204px;
}
.info {
  display: flex;
  align-items: start;
  justify-content: space-between;
  padding: 6px 8px 0 2px;
}
.info p {
  width: 246px;
  height: 26px;
  padding: 0 9px;
  border-bottom: 1px solid #999;
  line-height: 20px;
  font-weight: 500;
}
.toggle {
  width: 12px;
  height: 18px;
}
.materials {
  display: flex;
  flex: 1;
  flex-direction: column;
  min-height: 0;
}
.materials .bar {
  flex: none;
}
.current {
  display: flex;
  flex: none;
  gap: 3px;
  align-items: start;
  height: 93px;
  padding: 2px 0 0 2px;
  border-bottom: 1px solid #999;
}
.preview {
  width: 77px;
  height: 87px;
  padding: 5px 0;
  border: 1px solid #999;
}
.preview svg {
  width: 75px;
  height: 75px;
}
.name {
  width: 162px;
  height: 24px;
  padding: 0 4px 3px;
  border: 1px solid #fff;
  border-top: 2px solid #777;
  border-left: 2px solid #777;
  background: #f1f1f1;
  color: #777;
  font: inherit;
}
.side {
  display: flex;
  flex: 1;
  flex-direction: column;
  gap: 9px;
  align-items: center;
  padding-top: 4px;
}
.make {
  width: 22px;
  height: 22px;
}
.default {
  width: 26px;
  height: 26px;
}
.tabs {
  display: flex;
  flex: none;
  align-items: end;
  height: 30px;
}
.tab {
  width: 47px;
  height: 21px;
  padding: 0 5px;
  border-top: 1px solid #fff;
  border-right: 2px solid #777;
  text-align: left;
  line-height: 18px;
}
.tab.on {
  width: 51px;
  height: 23px;
  padding: 0 8px;
}
.tabs .plain {
  align-self: center;
  margin: 0 3px 0 auto;
}
.dropper {
  width: 22px;
  height: 22px;
}
.finder {
  display: flex;
  flex: none;
  gap: 6px;
  align-items: start;
  height: 36px;
  padding: 5px 4px 0 7px;
  border-bottom: 1px solid #999;
}
.arrow {
  width: 20px;
  height: 20px;
  padding: 2px 0;
}
.home {
  width: 24px;
  height: 20px;
}
.details {
  width: 18px;
  height: 18px;
}
.combo {
  position: relative;
  width: 158px;
  height: 27px;
}
.combo select {
  width: 100%;
  height: 100%;
  padding: 0 4px;
  appearance: none;
  border: 1px solid #fff;
  border-top: 2px solid #777;
  border-left: 2px solid #777;
  border-radius: 0;
  background: #fff;
  color: #000;
  font: inherit;
}
.combo.focus::before {
  content: '';
  position: absolute;
  left: 6px;
  right: 26px;
  bottom: 2px;
  height: 1px;
  background: #000;
}
.combo::after {
  content: '\25BC';
  position: absolute;
  top: 2px;
  right: 1px;
  width: 21px;
  height: 23px;
  border-right: 2px solid #777;
  border-bottom: 2px solid #777;
  background: #f1f1f1;
  text-align: center;
  font: 9px/24px "DejaVu Sans", sans-serif;
  pointer-events: none;
}
.list {
  display: flex;
  overflow: hidden;
  background: #fff;
}
.tiles {
  display: grid;
  flex: 1;
  grid-template-columns: repeat(auto-fill, 62px);
  gap: 2px;
  align-content: start;
  padding: 2px 3px;
}
.tile {
  width: 62px;
  height: 62px;
  border: 1px solid #999;
}
.swatches {
  flex: 1;
  min-height: 0;
}
.swatches .tile {
  padding: 1px;
  background-clip: content-box;
}
.a1 { background-color: #ffcdcd; }
.a2 { background-color: #ff9c9c; }
.a3 { background-color: #ff6767; }
.a4 { background-color: #ff3434; }
.a5 { background-color: #ff0000; }
.a6 { background-color: #cc0000; }
.a7 { background-color: #990000; }
.a8 { background-color: #660000; }
.b1 { background-color: #ffd9cf; }
.b2 { background-color: #ffb39b; }
.b3 { background-color: #ff8e66; }
.b4 { background-color: #ff6834; }
.b5 { background-color: #ff4200; }
.b6 { background-color: #cc3300; }
.b7 { background-color: #992800; }
.b8 { background-color: #661a00; }
.c1 { background-color: #ffe6cf; }
.c2 { background-color: #ffcc99; }

.scroll {
  display: flex;
  flex: none;
  flex-direction: column;
  width: 19px;
  padding: 4px 0;
  background: #f1f1f1;
}
.scroll svg {
  width: 12px;
  height: 12px;
  margin: 0 auto;
}
.thumb {
  height: 21px;
  margin: 5px 0 auto;
  background: #cdcdcd;
}
.outer {
  width: 21px;
  padding: 6px 1px 4px;
}

.second {
  flex: none;
  margin-top: 3px;
  border-top: 2px solid #777;
}
.second h3 {
  height: 23px;
  margin-top: 4px;
  padding: 0 5px;
  border-top: 1px solid #999;
  border-bottom: 1px solid #999;
  background: #e4e4e4;
  line-height: 20px;
  font-size: 12px;
}
.folders {
  height: 81px;
}
.folders .tile {
  display: flex;
  flex-direction: column;
  align-items: start;
  padding-top: 12px;
}
.folders .tile svg {
  flex: none;
  width: 38px;
  height: 34px;
  margin-left: 10px;
}
.folders .tile span {
  margin-top: -6px;
  padding: 0 3px;
  background: #fff;
  line-height: 16px;
}

/* status bar */
.status {
  display: flex;
  flex: none;
  gap: 17px;
  align-items: center;
  height: 26px;
  padding: 2px 5px 0 6px;
  overflow: hidden;
  border-top: 1px solid #fff;
}
.status svg {
  width: 18px;
  height: 18px;
  margin-top: 6px;
}
.status .hint {
  flex: 1;
  margin-left: -4px;
  padding-left: 10px;
  border-left: 1px solid #999;
  line-height: 18px;
  font-size: 17px;
}
.status label {
  margin-right: -7px;
  padding-left: 11px;
  border-left: 1px solid #999;
  line-height: 18px;
  font-size: 17px;
}
#vcb {
  align-self: end;
  width: 250px;
  height: 23px;
  padding: 3px 3px 0;
  border: 1px solid #a9bcd6;
  border-bottom: 0;
  background: #ffffe1;
  font: inherit;
  font-size: 16px;
}
```
